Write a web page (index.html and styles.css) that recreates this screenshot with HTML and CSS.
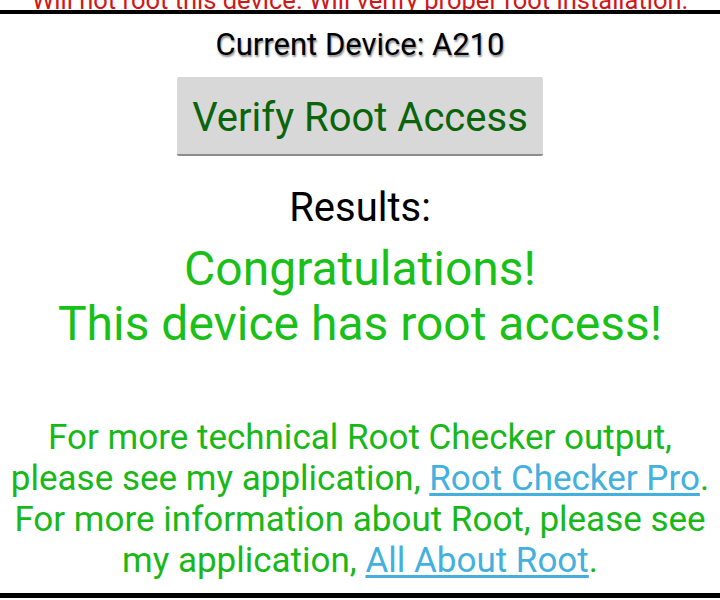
FILE: index.html
```html
<!DOCTYPE html>
<html lang="en">
<head>
  <meta charset="UTF-8">
  <title>Root Checker</title>
  <link rel="stylesheet" href="styles.css">
</head>
<body>
  <div class="screen">
    <div class="notice">
      <span class="notice-text">Will not root this device. Will verify proper root installation.</span>
    </div>
    <div class="rule"></div>

    <div class="content">
      <div class="device">Current Device: A210</div>
      <button class="verify-btn">Verify Root Access</button>

      <div class="results-label">Results:</div>
      <div class="results-msg">
        Congratulations!<br>
        This device has root access!
      </div>

      <!-- links to the other apps -->
      <p class="more-info">
        For more technical Root Checker output,<br>
        please see my application, <a href="#" class="app-link">Root Checker Pro</a>.<br>
        For more information about Root, please see<br>
        my application, <a href="#" class="app-link">All About Root</a>.
      </p>
    </div>

    <div class="rule rule-bottom"></div>
  </div>
</body>
</html>
```

FILE: styles.css
```css
html, body {
  margin: 0;
  padding: 0;
  background: #fff;
  font-family: Roboto, 'Noto Sans', sans-serif;
}
.screen {
  width: 720px;
  height: 600px;
  display: flex;
  flex-direction: column;
  overflow: hidden;
}
.notice {
  height: 10px;
  display: flex;
  flex-direction: column;
  justify-content: flex-end;
  align-items: center;
  overflow: hidden;
}
.notice-text {
  color: #d01818;
  font-size: 25.5px;
  line-height: 25px;
  white-space: nowrap;
  margin-bottom: -3px;
}
.rule {
  height: 4px;
  background: #000;
  flex-shrink: 0;
}
.rule-bottom {
  height: 5px;
  margin-top: auto;
  margin-bottom: 2px;
}
.content {
  display: flex;
  flex-direction: column;
  align-items: center;
  text-align: center;
}
.device {
  margin-top: 14px;
  font-size: 31px;
  line-height: 34px;
  color: #000;
  text-shadow: 1px 2px 2px rgba(0,0,0,0.45);
}
.verify-btn {
  margin-top: 15px;
  width: 366px;
  height: 79px;
  background: #d8d8d8;
  border: none;
  border-bottom: 2px solid #8c8c8c;
  border-radius: 2px;
  font-family: inherit;
  font-size: 40px;
  line-height: 82px;
  color: #0a640a;
  padding: 0;
}
.results-label {
  margin-top: 30px;
  font-size: 40px;
  line-height: 44px;
  color: #000;
}
.results-msg {
  margin-top: 11px;
  font-size: 48px;
  line-height: 55px;
  color: #18c018;
}
.more-info {
  margin: 66px 0 0 0;
  font-size: 35px;
  line-height: 41px;
  color: #18b818;
}
.app-link {
  color: #44b0de;
  text-underline-offset: 3px;
}
```
